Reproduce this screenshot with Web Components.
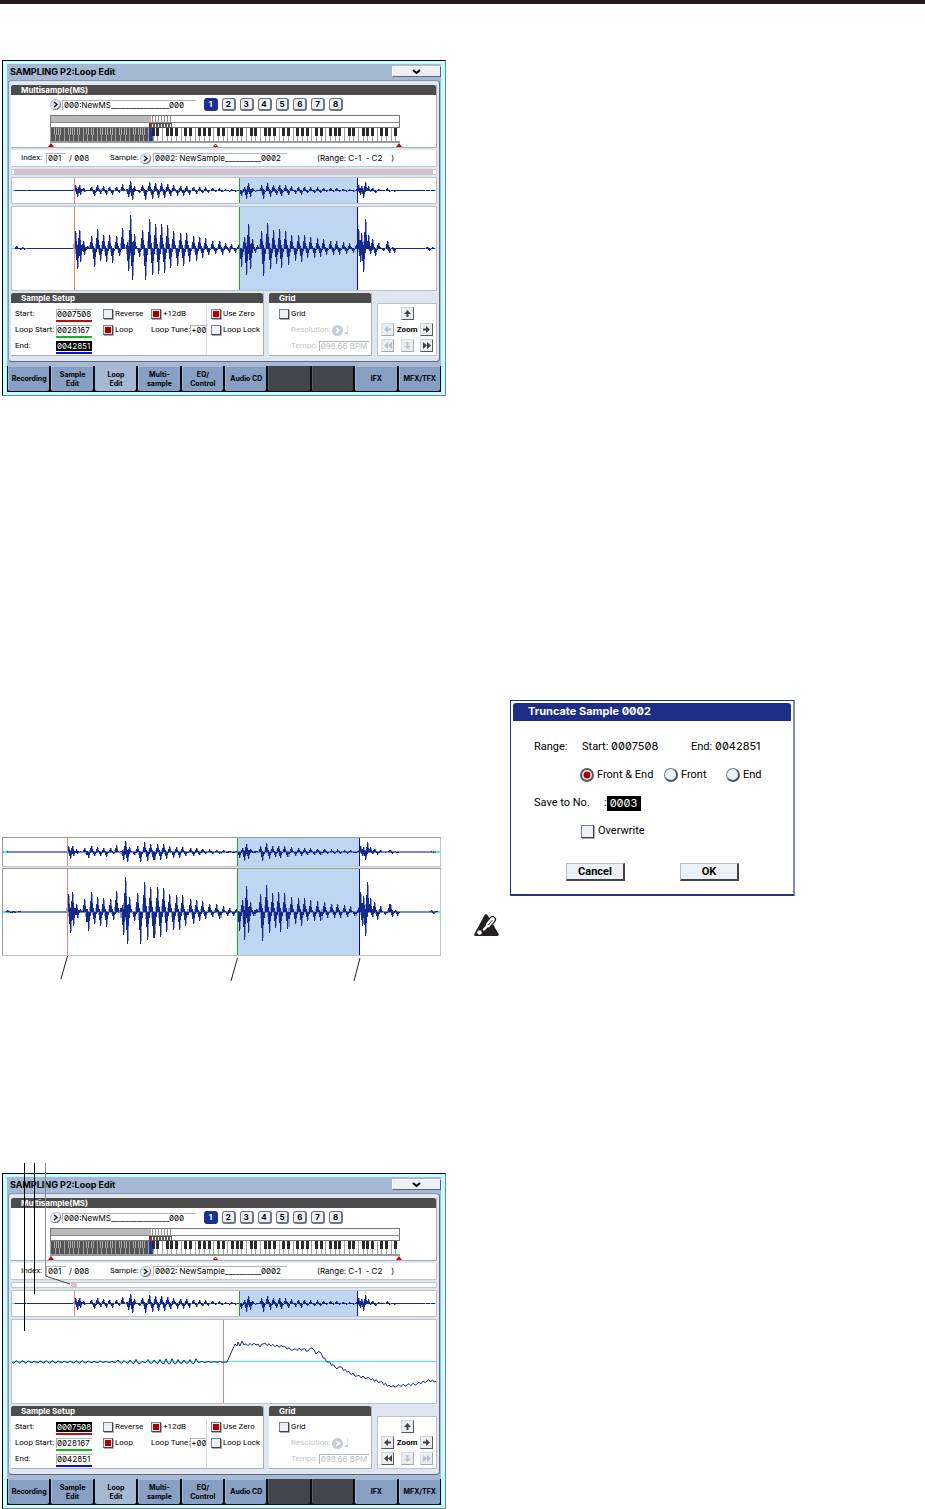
<!DOCTYPE html>
<html lang="en">
<head>
<meta charset="utf-8">
<meta name="viewport" content="width=device-width, initial-scale=1">
<title>Sampling P2: Loop Edit</title>
<style>
  body { margin: 0; background: #fff; color: #000; font: 8px/10px Roboto, "Liberation Sans", sans-serif; font-variant-numeric: slashed-zero; }
</style>
</head>
<body>
<manual-page></manual-page>
<script>
/* The setup step works on the cloned fragment, so nested elements see their attributes before they connect. */
const define = (name, html, setup) => {
  const template = document.createElement('template');
  template.innerHTML = '<style>*{box-sizing:border-box}</style>' + html;
  customElements.define(name, class extends HTMLElement {
    connectedCallback() {
      if (this.shadowRoot) return;
      const fragment = template.content.cloneNode(true);
      if (setup) setup(this, fragment);
      this.attachShadow({ mode: 'open' }).append(fragment);
    }
  });
};

/* Sample peaks as [position, level] in thirds of a pixel */
const peaks = [
  [47,7],[55,3],[66,4],[83,3],[225,52],[236,57],[248,23],[262,8],[274,37],[292,58],[310,42],[328,40],[348,37],[367,61],[380,20],[391,100],[403,43],[427,55],[446,88],[464,73],[483,73],[502,70],[520,52],[540,48],[559,48],[578,37],[597,35],[616,31],[637,24],[656,22],[676,16],
  [694,13],[715,10],[732,36],[745,75],[756,30],[770,10],[782,52],[800,78],[818,55],[836,58],[855,54],[874,42],[893,40],[912,40],[931,34],[951,31],[970,30],[990,24],[1009,24],[1028,19],[1048,16],[1068,12],[1075,58],[1084,46],[1094,88],[1104,41],[1116,30],[1135,18],[1160,22],[1175,5],[1280,6],[1295,4],
  [60,-4],[72,-3],[230,-61],[241,-40],[253,-18],[282,-55],[300,-36],[319,-40],[337,-43],[357,-22],[385,-67],[397,-93],[416,-25],[436,-93],[455,-80],[473,-75],[491,-73],[511,-59],[530,-53],[549,-51],[568,-40],[587,-36],[606,-27],[625,-20],[645,-15],[665,-19],
  [686,-12],[705,-12],[724,-55],[739,-80],[750,-60],[766,-12],[790,-83],[809,-61],[827,-46],[844,-57],[865,-48],[884,-36],[903,-40],[922,-27],[941,-27],[960,-25],[979,-18],[999,-18],[1018,-18],[1038,-15],[1058,-12],[1081,-40],[1088,-70],[1109,-15],[1125,-23],[1150,-8],[1167,-14],[1182,-12],[1288,-7]
];
const bars = (axis, scale) => {
  let dark = '', pale = '';
  const bar = (x, h) => `M${x + .5} ${axis + .5}V${axis + .5 - h}`;
  for (const [px, level] of peaks) {
    const x = Math.round(px / 3) - 12, h = level / 3 * scale;
    dark += bar(x, h) + bar(x - 1, h * .55) + bar(x + 1, h * .45) + bar(x + 2, h * .2);
    pale += bar(x + 1, h * .9) + bar(x - 2, h * .25);
  }
  return `<path d="${pale}" stroke="#8a97c6"/><path d="${dark}" stroke="#13298c"/>`;
};
const detail = () => {
  let d = 'M0 42';
  for (let x = 2; x < 211; x += 2) {
    const a = x < 90 ? 1.6 : x > 105 && x < 130 ? 2.8 : x > 135 && x < 185 ? 3.4 : .7;
    d += `L${x} ${(42 + a * Math.sin(x * 1.05) * (.8 + .2 * Math.sin(x * .21))).toFixed(1)}`;
  }
  const curve = [[215,42],[223,24],[225,26],[226,22],[228,26],[230,21],[232,25],[246,24],[248,27],[251,24],[271,27],[281,30],[291,29],[296,31],[300,28],[304,34],[308,32],[311,38],[316,42],[323,47],[325,49],[328,47],[335,52],[345,56],[355,58],[368,62],[379,67],[385,66],[395,65],[405,64],[415,61],[424,61]];
  for (let i = 0; i < curve.length; i++) {
    const [x, y] = curve[i];
    if (i > 6) {
      const [a, b] = curve[i - 1], n = Math.max(1, Math.round((x - a) / 2));
      for (let k = 1; k < n; k++) d += `L${a + (x - a) * k / n} ${(b + (y - b) * k / n + (k % 2 ? -1.2 : 1)).toFixed(1)}`;
    }
    d += `L${x} ${y}`;
  }
  return d;
};

define('wave-view', `
<style>
  :host { display: block; background: #fff; border: 1px solid #bcc3cb; min-width: 0; }
  svg { display: block; width: 100%; height: 100%; }
</style><div style="display:contents"></div>`, (host, root) => {
  const kind = host.getAttribute('kind'), small = kind === 'overview';
  const h = small ? 25 : 83, axis = small ? 12 : 41;
  const body = kind === 'detail'
    ? `<path d="M0 41.500H424" stroke="#2cf4ff"/><path d="M211.500 0V83" stroke="#dc8686"/><path d="${detail()}" fill="none" stroke="#13298c"/>`
    : `<g shape-rendering="crispEdges"><rect x="227" width="119" height="${h}" fill="#bfd6f2"/>
       <path d="M0 ${axis + .5}H424" stroke="#2cf4ff"/><path d="M4 ${axis + .5}H420" stroke="${host.hasAttribute('pale') ? '#7688c4' : '#13298c'}"/>
       ${bars(axis, small ? .3 : 1)}
       <path d="M62.500 0V${h}" stroke="#dc8686"/><path d="M227.500 0V${h}" stroke="#12b21c"/><path d="M345.500 0V${h}" stroke="#0808dc"/></g>`;
  root.querySelector('div').innerHTML = `<svg viewBox="0 0 424 ${h}" preserveAspectRatio="none" role="img" aria-label="Waveform">${body}</svg>`;
});

define('key-map', `
<style>:host { display: block; height: 32px; } svg { display: block; width: 100%; height: 100%; overflow: visible; }</style>
<div style="display:contents"></div>`, (host, root) => {
  let keys = '', ticks = '';
  const step = 350 / 75;
  for (let i = 0; i < 75; i++) {
    const x = Math.round(i * step), muted = x < 99;
    keys += `<rect x="${x + 1}" y="13" width="4" height="13" fill="${muted ? '#555' : '#fff'}"/><path d="M${x + .5} 13V26" stroke="#a0a0a0"/>`;
  }
  for (let i = 0; i < 74; i++) {
    if ([2, 6].includes(i % 7)) continue;
    const x = Math.round((i + 1) * step), muted = x < 99;
    keys += muted ? `<rect x="${x - 1}" y="13" width="3" height="7" fill="#aaa"/><rect x="${x}" y="13" width="1" height="7" fill="#555"/>`
                  : `<rect x="${x - 1}" y="13" width="3" height="8" fill="#2a2a2a"/>`;
  }
  for (let x = 102; x < 121; x += 3) ticks += `<path d="M${x + .5} 1V8" stroke="#8d8d8d"/><rect x="${x - .5}" y="8.500" width="2" height="4" fill="#fff" stroke="#555"/>`;
  root.querySelector('div').innerHTML = `<svg viewBox="0 0 350 32" preserveAspectRatio="none" role="img" aria-label="Keyboard zones"><g shape-rendering="crispEdges">
    <rect x=".5" y=".5" width="349" height="27" fill="#fff" stroke="#777"/>
    <rect x="1" y="1" width="100" height="6" fill="#b9b9b9"/><path d="M1 7.500H349" stroke="#888"/><path d="M1 12.500H349" stroke="#777"/>
    ${keys}${ticks}<rect x="99" y="8" width="2" height="5" fill="#b51212"/><rect x="99" y="13" width="3" height="13" fill="#1c3a9c"/>
    <rect x="0" y="26" width="350" height="2" fill="#999"/></g>
    <path d="M-2 32L1 28L4 32ZM346 32L349 28L352 32Z" fill="#b00c0c"/><path d="M163.500 31.500L165.500 29L167.500 31.500Z" fill="#fff" stroke="#b00c0c"/></svg>`;
});

define('bar-panel', `
<style>
  :host { display: block; background: #fff; border-right: 1px solid #a9b0b8; border-bottom: 1px solid #a9b0b8; min-width: 0; }
  h3 { margin: 0; height: 10px; padding-left: 10px; background: #4c4c4c; color: #fff; font: 700 8px/10px Inter, sans-serif; border-radius: 2px 2px 0 0; }
</style><h3><slot name="title"></slot></h3><slot></slot>`);

define('pop-button', `
<style>
  :host { display: block; width: 11px; height: 11px; flex: none; }
  button { display: block; width: 11px; height: 11px; padding: 0; border: 0; border-radius: 50%; background: #e6eaf2; box-shadow: inset -1px -1px 0 #70757e, inset 1px 1px 0 #c3c8d2; }
  button:disabled { background: #c6ccd8; box-shadow: none; }
  svg { display: block; } path { fill: none; stroke: #222; stroke-width: 1.500; } button:disabled path { stroke: #fff; }
</style><button aria-label="Open list"><svg width="11" height="11"><path d="M4 3L7 5.500L4 8"/></svg></button>`,
(host, root) => { root.querySelector('button').disabled = host.hasAttribute('disabled'); });

define('value-field', `
<style>
  :host { display: block; min-width: 0; }
  input { display: block; width: 100%; height: 10px; margin: 0; padding: 0 0 1px 1px; border: solid #aeb3bd; border-width: 1px 0 0 1px; border-radius: 0; background: #fff; color: #000; font: 8px/8px Inter, sans-serif; font-variant-numeric: inherit; outline: 0; }
  :host([active]) input { background: #000; color: #fff; border-color: #000; }
  input:disabled { color: #bcc0c8; background: #fff; }
  :host([tight]) input { padding-left: 0; }
  :host([line]) input { padding-left: 0; margin-bottom: 1px; }
  :host([line])::after { content: ""; display: block; height: 2px; background: var(--line); }
</style><input>`, (host, root) => {
  const input = root.querySelector('input');
  input.setAttribute('value', host.getAttribute('value'));
  input.setAttribute('aria-label', host.getAttribute('label'));
  input.disabled = host.hasAttribute('disabled');
  if (host.hasAttribute('line')) host.style.setProperty('--line', host.getAttribute('line'));
});

define('check-item', `
<style>
  :host { display: block; }
  label { display: flex; align-items: center; gap: 2px; white-space: nowrap; }
  input { appearance: none; flex: none; width: 10px; height: 10px; margin: 0; border: 1px solid; border-color: #7d828c #444 #444 #7d828c; background: #edf1f7; box-shadow: 1px 1px 0 #a8adb5; }
  input:checked { background: linear-gradient(#a00, #a00) center / 6px 6px no-repeat #f6dede; }
  :host([large]) label { gap: 4px; }
  :host([large]) input { width: 13px; height: 13px; }
</style><label><input type="checkbox"><slot></slot></label>`,
(host, root) => { root.querySelector('input').toggleAttribute('checked', host.hasAttribute('checked')); });

define('zoom-pad', `
<style>
  :host { display: grid; grid-template: repeat(3, 13px) / 13px 1fr 13px; gap: 3px 2px; place-items: center; padding: 3px; background: #fff; border: 1px solid #bcc3cb; }
  button { width: 13px; height: 13px; padding: 0; border: 1px solid; border-color: #d0d4da #55585e #55585e #d0d4da; background: #e9edf4; color: #444; }
  button:disabled { color: #bdc0c6; border-color: #dcdfe4 #a4a7ad #a4a7ad #dcdfe4; }
  svg { display: block; margin: auto; fill: currentColor; } b { font: 700 8px/10px Roboto, sans-serif; }
</style>
<i></i><button aria-label="Vertical zoom in"><svg width="7" height="7"><path d="M3.500 0L7 4H4.500V7H2.500V4H0Z"/></svg></button><i></i>
<button aria-label="Horizontal zoom out" data-k="left"><svg width="7" height="7"><path d="M0 3.500L4 0V2.500H7V4.500H4V7Z"/></svg></button><b>Zoom</b>
<button aria-label="Horizontal zoom in"><svg width="7" height="7"><path d="M7 3.500L3 0V2.500H0V4.500H3V7Z"/></svg></button>
<button aria-label="Full zoom out" data-k="all"><svg width="8" height="7"><path d="M4 0V7L0 3.500ZM8 0V7L4 3.500Z"/></svg></button>
<button aria-label="Vertical zoom out" data-k="down" disabled><svg width="7" height="7"><path d="M3.500 7L7 4H4.500V0H2.500V4H0Z"/></svg></button>
<button aria-label="Full zoom in" data-k="full"><svg width="8" height="7"><path d="M0 0V7L4 3.500ZM4 0V7L8 3.500Z"/></svg></button>`,
(host, root) => {
  const off = host.hasAttribute('zoomed') ? ['full'] : ['left', 'all'];
  off.forEach(k => { root.querySelector(`[data-k=${k}]`).disabled = true; });
});

define('tab-strip', `
<style>
  :host { display: grid; grid-template-columns: repeat(10, 1fr); height: 26px; background: #0a0b0f; padding: 0 1px 1px; gap: 2px; }
  button { min-width: 0; padding: 0; border: 0; border-radius: 0 0 2px 2px; background: #869fc3; color: #000; font: 700 7px/9px Inter, sans-serif; border-left: 1px solid #a5b8d4; box-shadow: inset 0 1px 0 #a5b8d4; }
  button[aria-selected=true] { background: #a5b8d4; }
  button:empty { background: #42454c; border-color: #5b5e66; box-shadow: none; }
</style>
<button>Recording</button><button>Sample<br>Edit</button><button aria-selected="true">Loop<br>Edit</button><button>Multi-<br>sample</button><button>EQ/<br>Control</button><button>Audio CD</button><button aria-label="Unused"></button><button aria-label="Unused"></button><button>IFX</button><button>MFX/TFX</button>`);

define('sample-setup', `
<style>
  :host { display: grid; grid-template-columns: minmax(0, 253fr) minmax(0, 103fr) minmax(0, 60fr); column-gap: 5px; height: 63px; }
  .body { display: grid; padding: 3px 0 1px 4px; grid-auto-rows: 16px; align-items: center; white-space: nowrap; }
  .set { grid-template-columns: 41px 36px 48px 66px 1fr; }
  .set > value-field[line] { align-self: end; }
  .second { padding-left: 11px; }
  .tune { display: flex; align-items: center; }
  .tune value-field { width: 17px; flex: none; }
  .lock { border-left: 1px solid #d5d8dc; padding-left: 4px; align-self: stretch; display: grid; align-items: center; }
  .grid { padding-left: 10px; }
  .dim { display: flex; align-items: center; gap: 1px; padding-left: 12px; color: #c0c4cc; }
  .dim value-field { width: 50px; }
  .note { font: 12px/12px "DejaVu Sans", sans-serif; }
  zoom-pad { margin-top: 10px; }
</style>
<bar-panel><span slot="title">Sample Setup</span><div class="body set">
  <span>Start:</span><value-field data-start label="Start" value="0007508" line="#c00c0c"></value-field><check-item class="second">Reverse</check-item><check-item class="second" checked>+12dB</check-item><div class="lock"><check-item checked>Use Zero</check-item></div>
  <span>Loop Start:</span><value-field label="Loop start" value="0028167" line="#10b818"></value-field><check-item class="second" checked>Loop</check-item><div class="tune second">Loop Tune:<value-field tight label="Loop tune" value="+00"></value-field></div><div class="lock"><check-item>Loop Lock</check-item></div>
  <span>End:</span><value-field data-end label="End" value="0042851" line="#0808e8"></value-field><i></i><i></i><div class="lock"></div>
</div></bar-panel>
<bar-panel><span slot="title">Grid</span><div class="body grid">
  <check-item>Grid</check-item>
  <div class="dim">Resolution:<pop-button disabled></pop-button><span class="note">♩</span></div>
  <div class="dim">Tempo:<value-field label="Tempo" value="098.66 BPM" disabled></value-field></div>
</div></bar-panel>
<zoom-pad></zoom-pad>`, (host, root) => {
  const zoomed = host.hasAttribute('zoomed');
  root.querySelector(zoomed ? '[data-start]' : '[data-end]').setAttribute('active', '');
  root.querySelector('zoom-pad').toggleAttribute('zoomed', zoomed);
});

define('sampler-screen', `
<style>
  :host { display: block; position: relative; padding: 3px 4px; border: 1px solid #000; border-right-color: #6b8a8c; border-bottom-color: #6b8a8c; background: #c6fdff; }
  .screen { background: #a5b8d4; }
  header { display: flex; justify-content: space-between; height: 16px; padding: 2px 0 0 3px; }
  h2 { margin: 0; font: 700 9px/12px Inter, sans-serif; }
  header button { width: 49px; height: 11px; padding: 0; border: 1px solid; border-color: #fff #60656e #60656e #fff; background: #edf1f7; }
  header svg { display: block; margin: auto; }
  .panel { display: grid; gap: 2px; grid-template-columns: 100%; margin: 0 1px 4px; padding: 4px 2px 5px; border: 1px solid; border-color: #8394ae #5d6a80 #5d6a80 #8394ae; border-radius: 4px; background: #dfe6ef; }
  .row { display: flex; align-items: center; }
  .ms { padding: 3px 0 4px 39px; height: 20px; gap: 1px; }
  .ms value-field, .index .name { width: 134px; }
  .slots { display: grid; grid-template-columns: repeat(8, 1fr); gap: 4px; width: 139px; margin-left: 7px; }
  .slots button { height: 13px; padding: 0; border: 1px solid #70757e; border-width: 1px 2px 2px 1px; border-radius: 3px; background: #edf1f7; color: #000; font: 700 8px/10px Inter, sans-serif; }
  .slots button:first-child { background: #1b2f8c; border-color: #1b2f8c; color: #fff; }
  key-map { margin: 0 36px 0 39px; }
  .index { height: 17px; padding-left: 10px; background: #fff; border: solid #c3c9d1; border-width: 0 1px 1px 0; }
  .index > :first-child { width: 25px; }
  .index .num { width: 20px; }
  .index .of { width: 44px; padding-left: 3px; font-family: Inter, sans-serif; }
  .index pop-button { margin: 0 2px 0 0; }
  .index .smp { width: 30px; }
  .range { padding-left: 30px; white-space: pre; font-family: Inter, sans-serif; }
  .scroll { height: 6px; background: #fff; border: 1px solid #c3c9d1; padding: 0 3px 0 2px; }
  .scroll div { height: 4px; background: #d5c0d0; }
  :host([zoomed]) .scroll div { width: 6px; margin-left: 57px; }
  [kind=overview] { height: 27px; } [data-main] { height: 85px; }
  .leads { position: absolute; left: 0; top: -11px; overflow: visible; display: none; }
  :host([zoomed]) .leads { display: block; }
</style>
<div class="screen">
  <header><h2>SAMPLING P2:Loop Edit</h2><button aria-label="Page menu"><svg width="9" height="6"><path d="M1 1L4.500 4L8 1" fill="none" stroke="#000" stroke-width="2"/></svg></button></header>
  <div class="panel">
    <bar-panel><span slot="title">Multisample(MS)</span>
      <div class="row ms"><pop-button></pop-button><value-field label="Multisample" value="000:NewMS________________000"></value-field>
        <div class="slots"><button>1</button><button>2</button><button>3</button><button>4</button><button>5</button><button>6</button><button>7</button><button>8</button></div></div>
      <key-map></key-map>
    </bar-panel>
    <div class="row index"><span>Index:</span><value-field class="num" label="Index" value="001"></value-field><span class="of">/ 008</span><span class="smp">Sample:</span><pop-button></pop-button><value-field class="name" label="Sample" value="0002: NewSample__________0002"></value-field><span class="range">(Range: C-1  - C2    )</span></div>
    <div class="scroll"><div></div></div>
    <wave-view kind="overview"></wave-view>
    <wave-view kind="full" data-main></wave-view>
    <sample-setup></sample-setup>
  </div>
  <tab-strip></tab-strip>
</div>
<svg class="leads" width="80" height="170" fill="none" stroke="#000"><path d="M21.500 0V168M31.500 0V131"/><path d="M42.500 0V113" stroke="#888"/><path d="M42.500 113L67 121" stroke="#444"/></svg>`, (host, root) => {
  if (!host.hasAttribute('zoomed')) return;
  root.querySelector('sample-setup').setAttribute('zoomed', '');
  root.querySelector('[data-main]').setAttribute('kind', 'detail');
});

define('wave-figure', `
<style>
  :host { display: grid; gap: 1px; background: linear-gradient(#e0e6ee, #e0e6ee) 0 0 / 100% 100px no-repeat; }
  [kind=overview] { height: 30px; } [kind=full] { height: 88px; }
  wave-view { border-top-color: #999; border-left-color: #999; }
  svg { display: block; width: 100%; height: 25px; margin-top: -1px; background: #fff; }
</style>
<wave-view kind="overview" pale></wave-view><wave-view kind="full" pale></wave-view>
<svg viewBox="0 0 439 25" preserveAspectRatio="none"><path d="M65.500 0L59 23M235.500 2L229 25M358 2L352 25" fill="none" stroke="#222"/></svg>`);

define('truncate-dialog', `
<style>
  :host { display: block; width: 285px; max-width: 100%; height: 196px; padding: 2px 2px 0; border: 1px solid #1b2d86; border-right: 2px solid #7f89bd; border-bottom: 2px solid #2a346f; background: #fff; font-size: 11px; line-height: 14px; }
  h2 { margin: 0; height: 18px; padding-left: 15px; border-radius: 3px 3px 0 0; background: #1b2d86; color: #fff; font: 700 11px/17px Inter, sans-serif; font-variant-numeric: slashed-zero; }
  form { margin: 0; padding: 19px 0 0 21px; }
  .row { display: flex; align-items: center; height: 14px; margin-bottom: 14px; }
  .key { width: 48px; } .save { width: 70px; }
  .row > .start { width: 109px; }
  .digits { font-family: Inter, sans-serif; line-height: 12px; }
  .opts { padding-left: 46px; }
  .opts label { display: flex; align-items: center; gap: 3px; width: 84px; white-space: nowrap; }
  .opts label + label { width: 62px; }
  input[type=radio] { appearance: none; flex: none; width: 14px; height: 14px; margin: 0; border-radius: 50%; border: 1px solid #777c86; border-right: 2px solid #50545c; border-bottom: 2px solid #50545c; background: #edf1f7; }
  input[type=radio]:checked { border: 2px solid #555a64; background: radial-gradient(circle, #a00 0 3px, #f6f0f2 4px); }
  .no { width: 34px; height: 15px; border: 0; padding: 0 3px; background: #000; color: #fff; font: 11px/15px Inter, sans-serif; font-variant-numeric: inherit; }
  check-item { padding-left: 47px; }
  .actions { padding: 11px 0 0 32px; display: flex; gap: 55px; }
  .actions button { width: 59px; height: 18px; padding: 0; border: 1px solid; border-color: #bbb #444 #444 #bbb; border-width: 1px 2px 2px 1px; background: #edf1f7; color: #000; font: 700 11px/14px Roboto, sans-serif; }
</style>
<h2>Truncate Sample 0002</h2>
<form>
  <div class="row"><span class="key">Range:</span><span class="start">Start: <span class="digits">0007508</span></span><span>End: <span class="digits">0042851</span></span></div>
  <div class="row opts"><label><input type="radio" name="part" checked>Front &amp; End</label><label><input type="radio" name="part">Front</label><label><input type="radio" name="part">End</label></div>
  <div class="row"><label class="save" for="no">Save to No.</label>:<input id="no" class="no" value="0003"></div>
  <div class="row"><check-item large>Overwrite</check-item></div>
  <div class="actions"><button type="button">Cancel</button><button type="button">OK</button></div>
</form>`);

define('caution-mark', `
<style>:host { display: block; } svg { display: block; }</style>
<svg width="26" height="22" role="img" aria-label="Caution"><path d="M10.700 .8Q12 -.7 13.300 .8L24.700 20Q25 22 23.500 22H1.500Q-.2 22 .4 20Z" fill="#231f20"/>
<g stroke-linecap="round" fill="none"><path d="M18.500 5.500L14.500 10.500" stroke="#231f20" stroke-width="7"/><path d="M18.500 5.500L14 11" stroke="#fff" stroke-width="4.500"/><path d="M14 11L10 15.500" stroke="#fff" stroke-width="2.500"/><path d="M18 6.500L14.500 10.800" stroke="#231f20" stroke-width="1"/></g><circle cx="5.500" cy="18.500" r="2.300" fill="#fff"/></svg>`);

define('manual-page', `
<style>
  :host { display: block; border-top: 4px solid #231820; }
  main { display: grid; grid-template-columns: calc(48% + 2px) 1fr; }
  .left { padding: 56px 0 0 2px; }
  wave-figure { margin: 441px 5px 192px 0; }
  .right { padding: 696px 0 0 28px; }
  truncate-dialog { margin: 0 0 18px 36px; }
</style>
<main>
  <div class="left"><sampler-screen></sampler-screen><wave-figure></wave-figure><sampler-screen zoomed></sampler-screen></div>
  <div class="right"><truncate-dialog></truncate-dialog><caution-mark></caution-mark></div>
</main>`);
</script>
</body>
</html>
